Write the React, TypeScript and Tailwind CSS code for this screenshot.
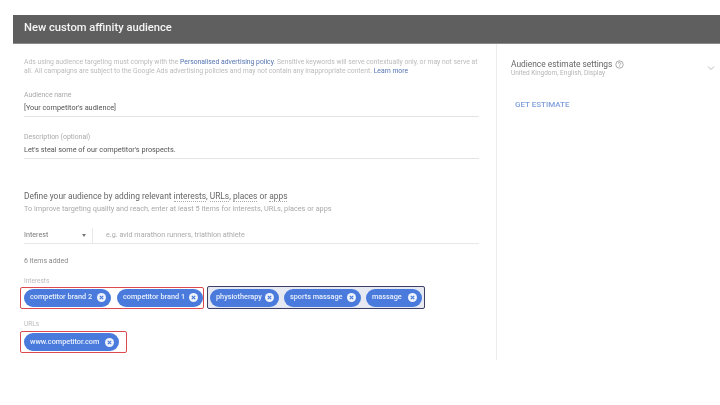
import React from 'react';

const Chip = ({ label, className }: { label: string; className: string }) => (
  <span className={`flex h-[18px] items-center justify-between rounded-full bg-[#4a7bdc] pl-[6.5px] pr-[3.5px] text-[7.3px] font-medium whitespace-nowrap text-[#e8effc] ${className}`}>
    {label}
    <svg width="11" height="11" viewBox="0 0 11 11">
      <circle cx="5.5" cy="5.5" r="4.5" fill="#eef3fc" />
      <path d="M3.8 3.8l3.4 3.4M7.2 3.8l-3.4 3.4" stroke="#4a7bdc" strokeWidth="1.2" />
    </svg>
  </span>
);

const Field = ({ label, value }: { label: string; value: string }) => (
  <div className="border-b border-[#e4e4e4] pb-[3px]">
    <div className="h-[10px] text-[6.9px] leading-[10px] text-[#aaa]">{label}</div>
    <div className="mt-[2px] h-[11px] text-[7.3px] leading-[11px] text-[#555]">{value}</div>
  </div>
);

const App = () => {
  return (
    <div className="h-[405px] w-[720px] overflow-hidden bg-white pt-[15px] pl-[13px] font-['Roboto',sans-serif] blur-[0.5px]">
      {/* Header */}
      <div className="flex h-[29px] items-center border-b border-[#8a8a8a] bg-[#5f5f5f] pb-[2px] pl-[11px] text-[11.2px] font-medium text-[#f4f4f4]">
        New custom affinity audience
      </div>

      <div className="flex h-[316px]">
        {/* Form */}
        <div className="w-[484px] border-r border-[#ececec] pt-[14px] pr-[17px] pl-[11px]">
          <p className="text-[6.8px] leading-[9px] whitespace-nowrap text-[#bbb]">
            Ads using audience targeting must comply with the{' '}
            <span className="text-[#5573b0]">Personalised advertising policy</span>. Sensitive keywords will
            serve contextually only, or may not serve at
            <br />
            all. All campaigns are subject to the Google Ads advertising policies and may not contain any
            inappropriate content. <span className="text-[#5573b0]">Learn more</span>
          </p>

          <div className="mt-[14px]">
            <Field label="Audience name" value="[Your competitor's audience]" />
          </div>
          <div className="mt-[15px]">
            <Field label="Description (optional)" value="Let's steal some of our competitor's prospects." />
          </div>

          <div className="mt-[31px] text-[8.4px] leading-[12px] text-[#666]">
            Define your audience by adding relevant{' '}
            <span className="border-b border-dotted border-[#aaa]">interests</span>,{' '}
            <span className="border-b border-dotted border-[#aaa]">URLs</span>,{' '}
            <span className="border-b border-dotted border-[#aaa]">places</span> or{' '}
            <span className="border-b border-dotted border-[#aaa]">apps</span>
          </div>
          <div className="mt-[2px] text-[7.3px] leading-[9px] text-[#aaa]">
            To improve targeting quality and reach, enter at least 5 items for interests, URLs, places or apps
          </div>

          <div className="mt-[15px] flex h-[16px] items-center border-b border-[#e8e8e8] text-[7.2px]">
            <div className="flex h-full w-[69px] items-center justify-between border-r border-[#e8e8e8] pr-[5px] text-[#777]">
              Interest
              <span className="mr-[1px] h-0 w-0 border-x-[2.5px] border-t-[3px] border-x-transparent border-t-[#777]" />
            </div>
            <span className="pl-[13px] text-[#aaa]">e.g. avid marathon runners, triathlon athlete</span>
          </div>

          <div className="mt-[12px] text-[7px] leading-[10px] text-[#888]">6 items added</div>
          <div className="mt-[11px] text-[6.5px] leading-[9px] text-[#bbb]">Interests</div>

          {/* Chip groups */}
          <div className="ml-[-4px] flex h-[23px] items-center gap-[3px]">
            <div className="flex h-[22px] w-[184px] items-center gap-[6px] rounded-[2px] border-[1.5px] border-[#dc4a4f] pl-[2.5px]">
              <Chip label="competitor brand 2" className="w-[87px]" />
              <Chip label="competitor brand 1" className="w-[86px]" />
            </div>
            <div className="flex h-[23px] w-[218px] items-center gap-[5px] rounded-[2px] border-[1.5px] border-[#3f3f63] bg-[#e6e9f2] pl-[1.5px]">
              <Chip label="physiotherapy" className="w-[69px]" />
              <Chip label="sports massage" className="w-[77px]" />
              <Chip label="massage" className="w-[56px]" />
            </div>
          </div>

          <div className="mt-[11px] text-[6.5px] leading-[9px] text-[#bbb]">URLs</div>
          <div className="mt-[2px] ml-[-4px] flex h-[22px] w-[107px] items-center rounded-[2px] border-[1.5px] border-[#dc4a4f] pl-[2.5px]">
            <Chip label="www.competitor.com" className="w-[95px]" />
          </div>
        </div>

        {/* Estimate settings */}
        <div className="flex-1 pt-[15px] pl-[14px]">
          <div className="flex items-start justify-between pr-[5px]">
            <div>
              <div className="flex items-center gap-[3px] text-[8.4px] leading-[10px] text-[#666]">
                Audience estimate settings
                <svg width="9" height="9" viewBox="0 0 9 9" fill="none" stroke="#888" strokeWidth="0.7">
                  <circle cx="4.5" cy="4.5" r="3.7" />
                  <path d="M3.3 3.6a1.2 1.2 0 1 1 1.8 1c-.4.3-.6.4-.6.9M4.5 6.2v.6" />
                </svg>
              </div>
              <div className="text-[6.5px] leading-[8px] text-[#b5b5b5]">United Kingdom, English, Display</div>
            </div>
            <svg className="mt-[6px]" width="8" height="6" viewBox="0 0 8 6" fill="none" stroke="#bbb" strokeWidth="1">
              <path d="M1 1.5l3 3 3-3" />
            </svg>
          </div>
          <div className="mt-[23px] pl-[4px] text-[8px] leading-[10px] font-medium text-[#7f9fdc]">GET ESTIMATE</div>
        </div>
      </div>
    </div>
  );
};

export default App;
